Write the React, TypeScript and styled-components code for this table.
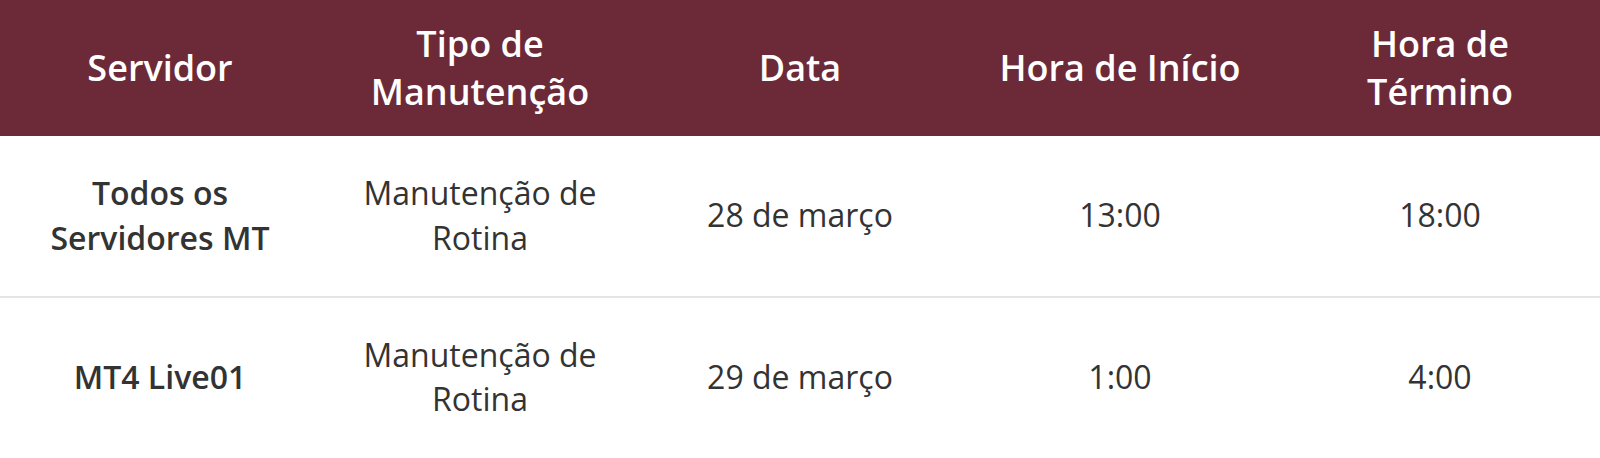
import styled, { createGlobalStyle } from "styled-components";

type Row = {
	server: string;
	type: string;
	date: string;
	start: string;
	end: string;
};

const rows: Row[] = [
	{
		server: "Todos os Servidores MT",
		type: "Manutenção de Rotina",
		date: "28 de março",
		start: "13:00",
		end: "18:00",
	},
	{
		server: "MT4 Live01",
		type: "Manutenção de Rotina",
		date: "29 de março",
		start: "1:00",
		end: "4:00",
	},
];

const headers = ["Servidor", "Tipo de Manutenção", "Data", "Hora de Início", "Hora de Término"];

export default function App() {
	return (
		<>
			<GlobalStyle />
			<Table>
				<thead>
					<tr>
						{headers.map((title) => (
							<HeadCell key={title}>{title}</HeadCell>
						))}
					</tr>
				</thead>
				<tbody>
					{rows.map((row, index) => (
						<BodyRow key={`${row.server}_${index}`} $last={index === rows.length - 1}>
							<Cell $bold>{row.server}</Cell>
							<Cell>{row.type}</Cell>
							<Cell>{row.date}</Cell>
							<Cell>{row.start}</Cell>
							<Cell>{row.end}</Cell>
						</BodyRow>
					))}
				</tbody>
			</Table>
		</>
	);
}

const GlobalStyle = createGlobalStyle`
	body {
		margin: 0;
		background: #ffffff;
		font-family: "Open Sans", "Noto Sans", sans-serif;
	}
`;

const Table = styled.table`
	width: 100%;
	table-layout: fixed;
	border-collapse: collapse;
`;

const HeadCell = styled.th`
	background: #6c2a38;
	color: #ffffff;
	font-size: 36px;
	font-weight: 600;
	line-height: 48px;
	padding: 20px 20px;
	text-align: center;
	vertical-align: middle;
`;

const BodyRow = styled.tr<{ $last?: boolean }>`
	border-bottom: ${({ $last }) => ($last ? "none" : "2px solid #e4e4e4")};
`;

const Cell = styled.td<{ $bold?: boolean }>`
	color: #333333;
	font-size: 32px;
	font-weight: ${({ $bold }) => ($bold ? 600 : 400)};
	line-height: 44.8px;
	padding: 35px 20px;
	text-align: center;
	vertical-align: middle;
`;
